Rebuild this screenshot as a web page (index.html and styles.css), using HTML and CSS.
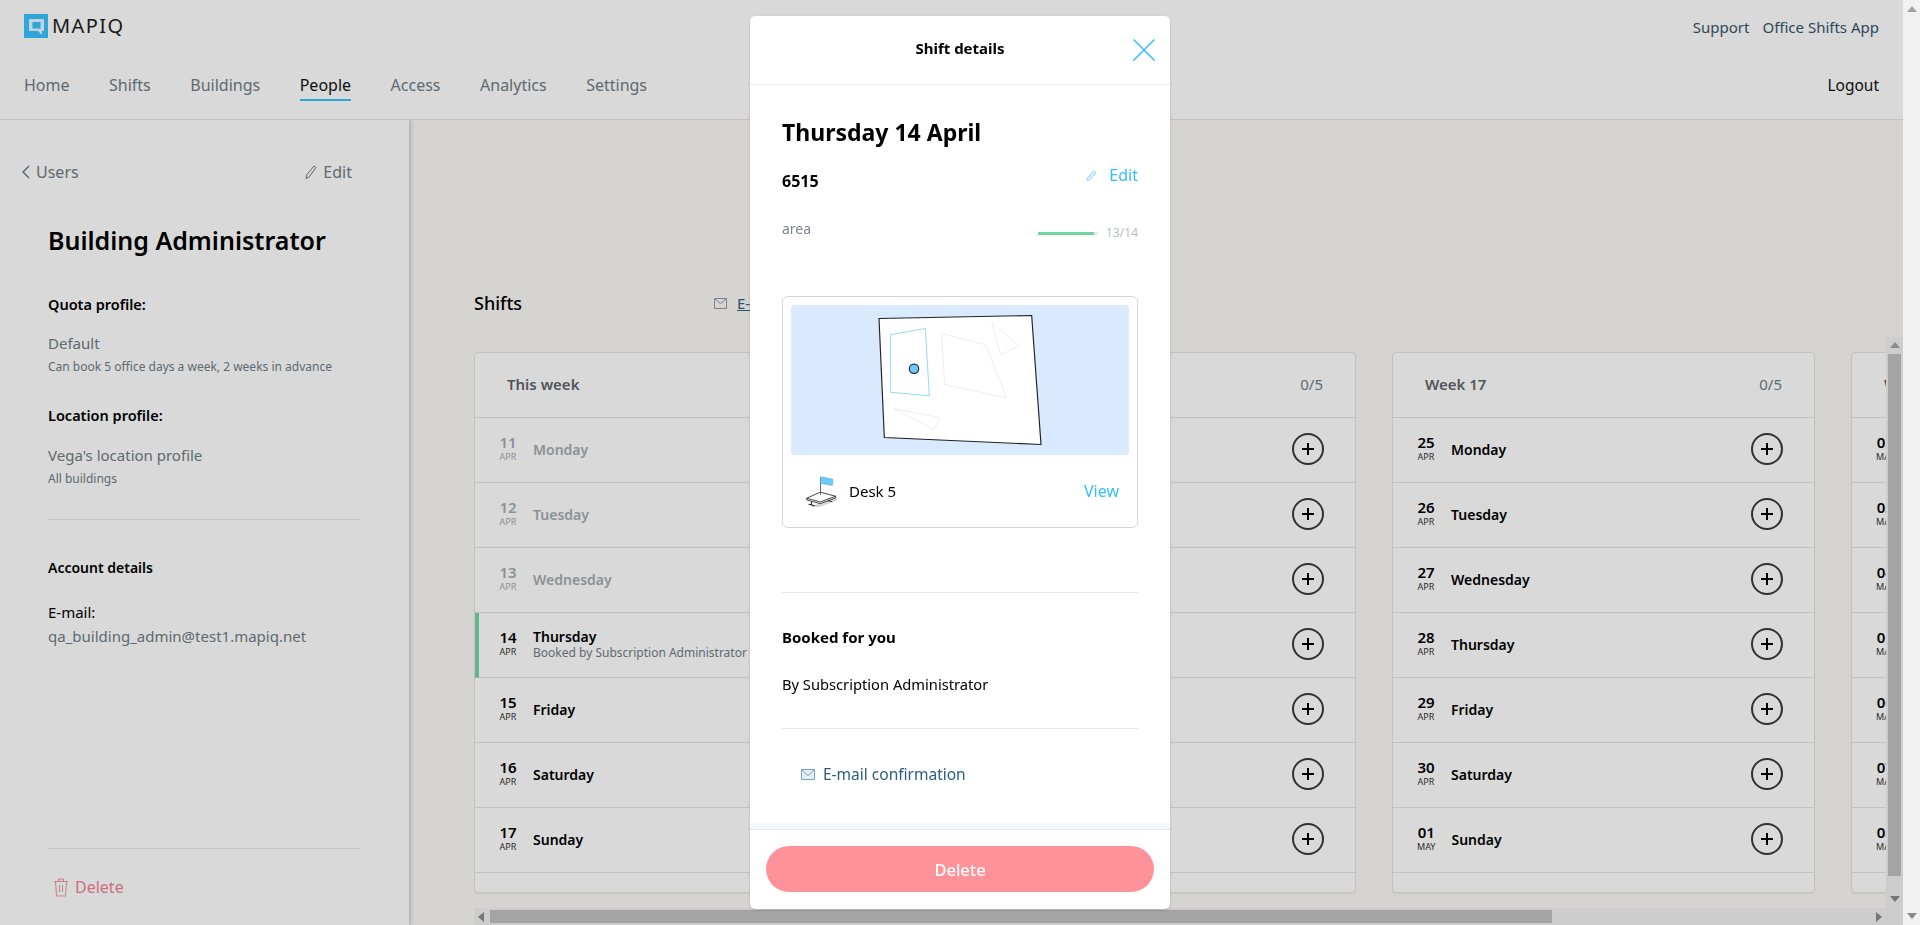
FILE: index.html
```html
<!DOCTYPE html>
<html lang="en">
<head>
    <meta charset="UTF-8">
    <title>Mapiq - Shift details</title>
    <link rel="stylesheet" href="styles.css">
</head>
<body>
    <div class="page">
        <!-- Top bar -->
        <header class="topbar">
            <div class="toprow">
                <div class="logo">
                    <svg class="logo-mark" width="24" height="24" viewBox="0 0 24 24">
                        <rect width="24" height="24" fill="#35c3ff"/>
                        <path d="M5 5h15v12h-2v4l-4-4H5z" fill="#e6f7ff"/>
                        <rect x="8.500" y="8" width="8" height="6.500" fill="#35c3ff"/>
                    </svg>
                    <span class="logo-text">MAPIQ</span>
                </div>
                <div class="toplinks">
                    <a>Support</a>
                    <a>Office Shifts App</a>
                </div>
            </div>
            <nav class="navrow">
                <a>Home</a>
                <a>Shifts</a>
                <a>Buildings</a>
                <a class="active">People</a>
                <a>Access</a>
                <a>Analytics</a>
                <a>Settings</a>
                <a class="logout">Logout</a>
            </nav>
        </header>

        <div class="content">
            <!-- Left panel -->
            <aside class="sidebar">
                <div class="side-top">
                    <a class="back">
                        <svg width="8" height="14" viewBox="0 0 8 14"><path d="M7 1L1 7l6 6" fill="none" stroke="#5d6a74" stroke-width="1.2"/></svg>
                        Users
                    </a>
                    <a class="side-edit">
                        <svg width="12" height="14" viewBox="0 0 12 14"><path d="M9 1l2 1.500L4 12l-3 1.500L1.500 10z" fill="none" stroke="#777" stroke-width="1"/></svg>
                        Edit
                    </a>
                </div>
                <h1 class="user-name">Building Administrator</h1>
                <h3 class="side-label quota">Quota profile:</h3>
                <p class="side-value default">Default</p>
                <p class="side-note">Can book 5 office days a week, 2 weeks in advance</p>
                <h3 class="side-label location">Location profile:</h3>
                <p class="side-value">Vega's location profile</p>
                <p class="side-note">All buildings</p>
                <div class="side-rule first"></div>
                <h3 class="side-label account">Account details</h3>
                <p class="email-label">E-mail:</p>
                <p class="email-value">qa_building_admin@test1.mapiq.net</p>
                <div class="side-bottom">
                    <div class="side-rule"></div>
                    <a class="side-delete">
                        <svg width="16" height="20" viewBox="0 0 16 20" fill="none" stroke="#ee96a0" stroke-width="1"><path d="M1 4.500h14M5.500 4.500V2h5v2.500M2.500 4.500L3.500 19h9l1-14.500M6.500 8v7M9.500 8v7"/></svg>
                        Delete
                    </a>
                </div>
            </aside>

            <!-- Shifts -->
            <main class="main">
                <div class="shifts-head">
                    <h2>Shifts</h2>
                    <svg class="head-mail" width="13" height="11" viewBox="0 0 13 11" fill="none" stroke="#8d9aa5"><path d="M.5.5h12v10H.5zM.5.5l6 5 6-5"/></svg>
                    <a class="head-link">E-mail confirmation</a>
                </div>
                <div class="scroller">
                    <div class="weeks">
                        <section class="week">
                            <div class="week-head"><span class="week-title">This week</span><span class="week-count">0/5</span></div>
                            <div class="day past"><div class="date"><b>11</b><small>APR</small></div><div class="day-name">Monday</div><span class="add"></span></div>
                            <div class="day past"><div class="date"><b>12</b><small>APR</small></div><div class="day-name">Tuesday</div><span class="add"></span></div>
                            <div class="day past"><div class="date"><b>13</b><small>APR</small></div><div class="day-name">Wednesday</div><span class="add"></span></div>
                            <div class="day booked"><div class="date"><b>14</b><small>APR</small></div><div class="day-name">Thursday<em>Booked by Subscription Administrator</em></div><span class="add"></span></div>
                            <div class="day"><div class="date"><b>15</b><small>APR</small></div><div class="day-name">Friday</div><span class="add"></span></div>
                            <div class="day"><div class="date"><b>16</b><small>APR</small></div><div class="day-name">Saturday</div><span class="add"></span></div>
                            <div class="day"><div class="date"><b>17</b><small>APR</small></div><div class="day-name">Sunday</div><span class="add"></span></div>
                        </section>
                        <section class="week">
                            <div class="week-head"><span class="week-title">Week 16</span><span class="week-count">0/5</span></div>
                            <div class="day"><div class="date"><b>18</b><small>APR</small></div><div class="day-name">Monday</div><span class="add"></span></div>
                            <div class="day"><div class="date"><b>19</b><small>APR</small></div><div class="day-name">Tuesday</div><span class="add"></span></div>
                            <div class="day"><div class="date"><b>20</b><small>APR</small></div><div class="day-name">Wednesday</div><span class="add"></span></div>
                            <div class="day"><div class="date"><b>21</b><small>APR</small></div><div class="day-name">Thursday</div><span class="add"></span></div>
                            <div class="day"><div class="date"><b>22</b><small>APR</small></div><div class="day-name">Friday</div><span class="add"></span></div>
                            <div class="day"><div class="date"><b>23</b><small>APR</small></div><div class="day-name">Saturday</div><span class="add"></span></div>
                            <div class="day"><div class="date"><b>24</b><small>APR</small></div><div class="day-name">Sunday</div><span class="add"></span></div>
                        </section>
                        <section class="week">
                            <div class="week-head"><span class="week-title">Week 17</span><span class="week-count">0/5</span></div>
                            <div class="day"><div class="date"><b>25</b><small>APR</small></div><div class="day-name">Monday</div><span class="add"></span></div>
                            <div class="day"><div class="date"><b>26</b><small>APR</small></div><div class="day-name">Tuesday</div><span class="add"></span></div>
                            <div class="day"><div class="date"><b>27</b><small>APR</small></div><div class="day-name">Wednesday</div><span class="add"></span></div>
                            <div class="day"><div class="date"><b>28</b><small>APR</small></div><div class="day-name">Thursday</div><span class="add"></span></div>
                            <div class="day"><div class="date"><b>29</b><small>APR</small></div><div class="day-name">Friday</div><span class="add"></span></div>
                            <div class="day"><div class="date"><b>30</b><small>APR</small></div><div class="day-name">Saturday</div><span class="add"></span></div>
                            <div class="day"><div class="date"><b>01</b><small>MAY</small></div><div class="day-name">Sunday</div><span class="add"></span></div>
                        </section>
                        <section class="week">
                            <div class="week-head"><span class="week-title">Week 18</span><span class="week-count">0/5</span></div>
                            <div class="day"><div class="date"><b>02</b><small>MAY</small></div><div class="day-name">Monday</div><span class="add"></span></div>
                            <div class="day"><div class="date"><b>03</b><small>MAY</small></div><div class="day-name">Tuesday</div><span class="add"></span></div>
                            <div class="day"><div class="date"><b>04</b><small>MAY</small></div><div class="day-name">Wednesday</div><span class="add"></span></div>
                            <div class="day"><div class="date"><b>05</b><small>MAY</small></div><div class="day-name">Thursday</div><span class="add"></span></div>
                            <div class="day"><div class="date"><b>06</b><small>MAY</small></div><div class="day-name">Friday</div><span class="add"></span></div>
                            <div class="day"><div class="date"><b>07</b><small>MAY</small></div><div class="day-name">Saturday</div><span class="add"></span></div>
                            <div class="day"><div class="date"><b>08</b><small>MAY</small></div><div class="day-name">Sunday</div><span class="add"></span></div>
                        </section>
                    </div>
                    <div class="vbar">
                        <span class="arrow up small"></span>
                        <span class="vthumb"></span>
                        <span class="arrow down small"></span>
                    </div>
                    <div class="hbar">
                        <span class="arrow left"></span>
                        <span class="hthumb"></span>
                        <span class="arrow right"></span>
                    </div>
                    <div class="corner"></div>
                </div>
            </main>
        </div>
    </div>

    <!-- Browser scrollbar, not dimmed by the overlay -->
    <div class="pagebar">
        <span class="arrow up"></span>
        <span class="arrow down"></span>
    </div>

    <!-- Modal -->
    <div class="overlay">
        <div class="modal">
            <div class="modal-head">
                <span class="modal-title">Shift details</span>
                <svg class="modal-close" width="22" height="22" viewBox="0 0 22 22"><path d="M.5.5l21 21M21.500.5l-21 21" fill="none" stroke="#35bdfb" stroke-width="1.500"/></svg>
            </div>
            <div class="modal-body">
                <h2 class="shift-date">Thursday 14 April</h2>
                <div class="shift-line">
                    <span class="shift-code">6515</span>
                    <a class="shift-edit">
                        <svg width="11" height="11" viewBox="0 0 11 11"><path d="M7.500 1L10 3l-6 6.500-3 1 .5-3z" fill="#d6f0fd" stroke="#8fd6f8" stroke-width=".9"/></svg>
                        Edit
                    </a>
                </div>
                <div class="area-line">
                    <span class="area-name">area</span>
                    <div class="area-usage">
                        <div class="usage-bar"><div class="usage-fill"></div></div>
                        <span class="usage-count">13/14</span>
                    </div>
                </div>
                <div class="map-card">
                    <svg class="map" width="338" height="150" viewBox="63 48 1014 449">
                        <polygon points="327,88 785,79 813,466 343,445" fill="#fff" stroke="#222" stroke-width="3.500"/>
                        <polygon points="361,137 466,118 478,320 361,309" fill="#fff" stroke="#8fdcfb" stroke-width="3"/>
                        <polygon points="515,133 647,167 710,326 524,286" fill="#fff" stroke="#eee" stroke-width="3"/>
                        <polygon points="665,100 747,170 692,197" fill="#fff" stroke="#eee" stroke-width="3"/>
                        <polygon points="370,358 511,386 492,421" fill="#fff" stroke="#eee" stroke-width="3"/>
                        <circle cx="432" cy="239" r="14" fill="#6ecbf8" stroke="#1d2a33" stroke-width="3.500"/>
                    </svg>
                    <div class="desk-row">
                        <svg class="desk-icon" width="31" height="31" viewBox="20 20 92 92">
                            <polygon points="36,108 112,84 112,92 60,112 36,112" fill="#d4d4d4"/>
                            <path d="M36 96v12M28 104l18 4M90 88v8M82 93l16 3" fill="none" stroke="#222" stroke-width="3"/>
                            <path d="M22 86v5l40 11 46-17v-5" fill="#fff" stroke="#222" stroke-width="2.500"/>
                            <polygon points="22,86 62,68 108,80 62,97" fill="#fff" stroke="#222" stroke-width="2.500"/>
                            <path d="M63 26v50" stroke="#666" stroke-width="3"/>
                            <polygon points="63,22 100,30 98,48 63,42" fill="#6ecbf8" stroke="#4a9cc8" stroke-width="1.500"/>
                        </svg>
                        <span class="desk-name">Desk 5</span>
                        <a class="desk-view">View</a>
                    </div>
                </div>
                <div class="modal-rule rule-one"></div>
                <h3 class="booked-title">Booked for you</h3>
                <p class="booked-by">By Subscription Administrator</p>
                <div class="modal-rule rule-two"></div>
                <a class="mail-link">
                    <svg width="14" height="11" viewBox="0 0 14 11" fill="#e4f0f8" stroke="#7fa0b6"><path d="M.5.5h13v10H.5z"/><path d="M.5.5l6.500 6 6.500-6" fill="none"/></svg>
                    E-mail confirmation
                </a>
            </div>
            <div class="modal-band"></div>
            <div class="modal-foot">
                <button class="delete-btn">Delete</button>
            </div>
        </div>
    </div>
</body>
</html>
```

FILE: styles.css
```css
/* Reset */
* {
    margin: 0;
    padding: 0;
    box-sizing: border-box;
}

body {
    display: flex;
    width: 1920px;
    height: 925px;
    overflow: hidden;
    background-color: #fbfaf6;
    font-family: "Noto Sans", sans-serif;
    font-size: 15px;
    color: #000;
}

.page {
    display: flex;
    flex-direction: column;
    width: 1903px;
    height: 925px;
}

/* Top bar */
.topbar {
    height: 120px;
    background-color: #fff;
    border-bottom: 1px solid #e3e3e3;
    padding: 0 24px;
}

.toprow {
    display: flex;
    justify-content: space-between;
    height: 62px;
    padding-top: 14px;
}

.logo {
    display: flex;
    align-items: flex-start;
    gap: 4px;
}

.logo-text {
    font-size: 20px;
    line-height: 24px;
    letter-spacing: 1.400px;
    color: #222;
}

.toplinks {
    display: flex;
    gap: 13px;
    line-height: 27px;
    color: #36556d;
}

.navrow {
    display: flex;
    gap: 39.500px;
    height: 39px;
    font-size: 16px;
    line-height: 22px;
    padding-top: 12px;
    color: #6f7c85;
}

.navrow a {
    display: block;
    height: 27px;
}

.navrow .active {
    color: #111;
    border-bottom: 2px solid #35c3ff;
}

.navrow .logout {
    margin-left: auto;
    font-size: 15.500px;
    color: #111;
}

.content {
    display: flex;
    flex: 1;
    min-height: 0;
}

/* Left panel */
.sidebar {
    display: flex;
    flex-direction: column;
    width: 409px;
    padding: 0 48px;
    background-color: #fff;
    box-shadow: 2px 0 4px rgba(0,0,0,0.18);
    clip-path: inset(0 -10px 0 0);
    position: relative;
}

.side-top {
    display: flex;
    justify-content: space-between;
    margin: 41px 0 0 -26px;
    width: 330px;
    font-size: 16px;
    line-height: 22px;
    color: #6f7c85;
}

.back,
.side-edit {
    display: flex;
    align-items: center;
    gap: 6px;
}

.user-name {
    margin-top: 40px;
    font-size: 25px;
    line-height: 34px;
    font-weight: 600;
}

.side-label {
    font-size: 14.500px;
    line-height: 20px;
    font-weight: 600;
}

.quota { margin-top: 37px; }
.location { margin-top: 29px; }
.account { margin-top: 38px; font-size: 14px; }

.side-value {
    margin-top: 19px;
    font-size: 15px;
    line-height: 22px;
    color: #6f7c85;
}

.side-value.default {
    margin-top: 18px;
}

.side-note {
    margin-top: 4px;
    font-size: 12px;
    line-height: 18px;
    color: #6f7c85;
}

.side-rule {
    width: 313px;
    height: 1px;
    background-color: #e8e8e8;
}

.side-rule.first {
    margin-top: 31px;
}

.email-label {
    margin-top: 23px;
    font-size: 15px;
    line-height: 22px;
}

.email-value {
    margin-top: 2px;
    font-size: 15px;
    line-height: 22px;
    color: #6f7c85;
}

.side-bottom {
    margin-top: auto;
    padding-bottom: 27px;
}

.side-delete {
    display: flex;
    align-items: center;
    gap: 6px;
    margin: 27px 0 0 5px;
    font-size: 16px;
    line-height: 22px;
    color: #f2848f;
}

/* Shifts */
.main {
    display: flex;
    flex-direction: column;
    flex: 1;
    min-width: 0;
    padding-left: 65px;
}

.shifts-head {
    display: flex;
    align-items: center;
    height: 24px;
    margin-top: 171px;
}

.shifts-head h2 {
    width: 240px;
    font-size: 18px;
    line-height: 24px;
    font-weight: 500;
}

.head-mail {
    margin-right: 10px;
}

.head-link {
    font-size: 15px;
    color: #2f5f85;
    text-decoration: underline;
}

.scroller {
    display: grid;
    grid-template-columns: 1412px 17px;
    grid-template-rows: 571px 17px;
    margin-top: 22px;
}

.weeks {
    display: flex;
    gap: 36px;
    padding-top: 15px;
    overflow: hidden;
}

.week {
    flex: none;
    width: 423px;
    height: 541px;
    border: 1px solid #e3e3e3;
    border-radius: 4px;
    background-color: #fff;
    box-shadow: 0 1px 2px rgba(0,0,0,0.06);
}

.week-head {
    display: flex;
    justify-content: space-between;
    align-items: center;
    height: 65px;
    padding: 0 32px 3px 32px;
    border-bottom: 1px solid #e3e3e3;
    overflow: hidden;
}

.week-title {
    font-size: 15px;
    font-weight: 600;
    color: #5f6468;
}

.week-count {
    font-size: 15px;
    color: #6f7c85;
}

.day {
    display: flex;
    align-items: center;
    height: 65px;
    padding: 0 31px 2px 24px;
    border-bottom: 1px solid #e3e3e3;
}

.date {
    display: flex;
    flex-direction: column;
    align-items: center;
    min-width: 18px;
    margin-top: -2px;
}

.date b {
    font-size: 15px;
    line-height: 18px;
    font-weight: 600;
}

.date small {
    font-size: 9px;
    line-height: 12px;
    color: #333;
}

.day-name {
    flex: 1;
    margin-left: 16px;
    font-size: 14px;
    line-height: 17px;
    font-weight: 600;
}

.day-name em {
    display: block;
    font-size: 12px;
    line-height: 16px;
    font-style: normal;
    font-weight: 400;
    color: #6f7c85;
}

.day.past .date b,
.day.past .date small,
.day.past .day-name {
    color: #a4acb2;
}

.day.booked {
    padding-left: 20px;
    border-left: 4px solid #74d9a2;
}

/* Plus button */
.add {
    position: relative;
    flex: none;
    width: 32px;
    height: 32px;
    border: 2px solid #3a3a3a;
    border-radius: 50%;
}

.add::before,
.add::after {
    content: "";
    position: absolute;
    top: 13px;
    left: 8px;
    width: 12px;
    height: 2px;
    background-color: #000;
}

.add::after {
    transform: rotate(90deg);
}

/* Fake scrollbars of the shift list */
.vbar {
    display: flex;
    flex-direction: column;
    align-items: center;
    background-color: #f1f1f1;
    padding: 5px 0 5px;
}

.vthumb {
    width: 13px;
    height: 522px;
    margin: 6px 0 20px;
    background-color: #c1c1c1;
}

.hbar {
    display: flex;
    align-items: center;
    background-color: #f1f1f1;
    padding: 0 4px;
}

.hthumb {
    width: 1062px;
    height: 13px;
    margin-left: 6px;
    background-color: #c1c1c1;
}

.hbar .right {
    margin-left: auto;
}

.corner {
    background-color: #f1f1f1;
}

.arrow {
    display: block;
    width: 0;
    height: 0;
    border: 5px solid transparent;
}

.arrow.up {
    border-top-width: 0;
    border-bottom: 6px solid #a3a3a3;
}

.arrow.down {
    border-bottom-width: 0;
    border-top: 6px solid #8a8a8a;
}

.arrow.left {
    border-left-width: 0;
    border-right: 6px solid #8a8a8a;
}

.arrow.right {
    border-right-width: 0;
    border-left: 6px solid #8a8a8a;
}

/* Browser scrollbar */
.pagebar {
    position: relative;
    z-index: 5;
    display: flex;
    flex-direction: column;
    justify-content: space-between;
    align-items: center;
    width: 17px;
    height: 925px;
    padding: 6px 0;
    background-color: #f1f1f1;
}

/* Modal */
.overlay {
    position: fixed;
    top: 0;
    left: 0;
    right: 0;
    bottom: 0;
    z-index: 2;
    display: flex;
    justify-content: center;
    padding-top: 16px;
    background-color: rgba(0,0,0,0.15);
}

.modal {
    display: flex;
    flex-direction: column;
    width: 420px;
    height: 893px;
    border-radius: 5px;
    background-color: #fff;
    box-shadow: 0 1px 3px rgba(0,0,0,0.2);
    overflow: hidden;
}

.modal-head {
    position: relative;
    flex: none;
    height: 69px;
    border-bottom: 1px solid #ebebeb;
    text-align: center;
    line-height: 65px;
}

.modal-title {
    font-size: 15px;
    font-weight: 700;
}

.modal-close {
    position: absolute;
    top: 23px;
    right: 15px;
}

.modal-body {
    flex: 1;
    padding: 0 32px;
}

.shift-date {
    margin-top: 30px;
    font-size: 23px;
    line-height: 34px;
    font-weight: 700;
}

.shift-line {
    display: flex;
    justify-content: space-between;
    height: 32px;
    margin-top: 14px;
}

.shift-code {
    margin-top: 6px;
    font-size: 16px;
    line-height: 24px;
    font-weight: 700;
}

.shift-edit {
    display: flex;
    align-items: center;
    gap: 12px;
    height: 24px;
    font-size: 16px;
    color: #35bdfb;
}

.area-line {
    display: flex;
    justify-content: space-between;
    align-items: flex-start;
    margin-top: 24px;
}

.area-name {
    font-size: 14px;
    line-height: 20px;
    color: #7b8591;
}

.area-usage {
    display: flex;
    align-items: center;
    gap: 8px;
    margin-top: 6px;
}

.usage-bar {
    width: 60px;
    height: 3px;
    background-color: #e8e8e8;
}

.usage-fill {
    width: 56px;
    height: 3px;
    background-color: #6fd59a;
}

.usage-count {
    font-size: 12px;
    line-height: 16px;
    color: #b5bcc4;
}

.map-card {
    height: 232px;
    margin-top: 55px;
    padding: 8px;
    border: 1px solid #d5d5d5;
    border-radius: 6px;
}

.map {
    display: block;
    background-color: #d9e9fe;
    border-radius: 3px;
}

.desk-row {
    display: flex;
    align-items: center;
    height: 72px;
    padding: 0 10px 0 15px;
}

.desk-name {
    margin-left: 12px;
    font-size: 15px;
}

.desk-view {
    margin-left: auto;
    font-size: 16px;
    color: #35bdfb;
}

.modal-rule {
    height: 1px;
    background-color: #e8e8e8;
}

.rule-one { margin-top: 64px; }
.rule-two { margin-top: 33px; }

.booked-title {
    margin-top: 33px;
    font-size: 15px;
    line-height: 22px;
    font-weight: 700;
}

.booked-by {
    margin-top: 25px;
    font-size: 14.700px;
    line-height: 22px;
}

.mail-link {
    display: flex;
    align-items: center;
    gap: 8px;
    margin: 34px 0 0 19px;
    font-size: 15.500px;
    line-height: 22px;
    color: #2b5d80;
}

.modal-band {
    flex: none;
    height: 7px;
    background-color: #f0f7fe;
    border-bottom: 1px solid #e8e8e8;
}

.modal-foot {
    flex: none;
    height: 79px;
    padding: 16px 16px 0;
}

.delete-btn {
    display: block;
    width: 388px;
    height: 46px;
    border: 0;
    border-radius: 23px;
    background-color: #ff9298;
    font-family: inherit;
    font-size: 16.500px;
    font-weight: 500;
    color: #fff;
}
```
